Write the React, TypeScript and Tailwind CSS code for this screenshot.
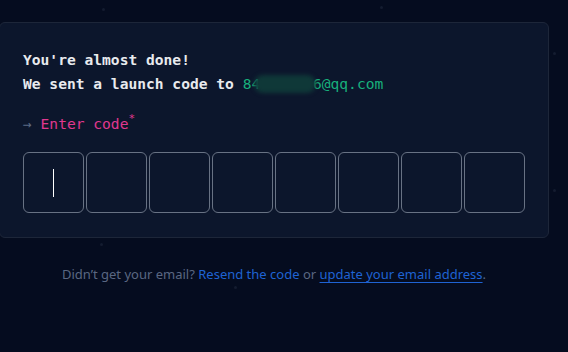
import React from 'react';

// ─── DATA ───

const CODE_LENGTH = 8;

const stars = [
  { x: 102, y: 8 },
  { x: 380, y: 6 },
  { x: 553, y: 52 },
  { x: 100, y: 243 },
  { x: 553, y: 189 },
  { x: 234, y: 286 },
];

// ─── COMPONENT ───

export default function App() {
  return (
    <div className="relative w-[568px] h-[352px] overflow-hidden bg-[#050c1f]">
      {/* faint background stars */}
      {stars.map((s, i) => (
        <span
          key={i}
          className="absolute w-[3px] h-[3px] rounded-full bg-[#141c30]"
          style={{ left: s.x, top: s.y }}
        />
      ))}

      <div className="relative ml-[-1px] pt-[22px] w-[550px]">
        {/* Card */}
        <div className="rounded-md border border-[#1d2639] bg-[#0c162c] pl-[23px] pr-[23px] pt-[25px] pb-[24px] font-['DejaVu_Sans_Mono',monospace] text-[14.6px] leading-[24px]">
          <p className="font-semibold text-[#e8eaee]">You're almost done!</p>
          <p className="font-semibold text-[#e8eaee]">
            We sent a launch code to{' '}
            <span className="font-normal text-[#18b07c]">
              84
              <span className="relative inline-block">
                <span className="text-transparent">xxxxxx</span>
                <span className="absolute left-[-6px] right-[-3px] top-[3px] bottom-[3px] rounded-full bg-[#0f3838] blur-[2px]" />
              </span>
              6@qq.com
            </span>
          </p>

          <p className="mt-[16px] text-[#e0388f]">
            <span className="text-[#5d6b86]">→</span> Enter code
            <sup className="text-[11px] top-[-0.6em]">*</sup>
          </p>

          {/* Code inputs */}
          <div className="mt-[16px] grid grid-cols-8 gap-[2px]">
            {Array.from({ length: CODE_LENGTH }).map((_, i) => (
              <div
                key={i}
                className="h-[61px] rounded-md border border-[#687284] flex items-center justify-center"
              >
                {i === 0 && <span className="w-px h-[28px] bg-white" />}
              </div>
            ))}
          </div>
        </div>

        {/* Footer */}
        <p className="mt-[26px] text-center font-['Noto_Sans',sans-serif] text-[13px] leading-[20px] text-[#5a6782]">
          Didn’t get your email?{' '}
          <a className="text-[#1f63d3]">Resend the code</a> or{' '}
          <a className="text-[#1f63d3] underline underline-offset-[3px]">update your email address</a>.
        </p>
      </div>
    </div>
  );
}
